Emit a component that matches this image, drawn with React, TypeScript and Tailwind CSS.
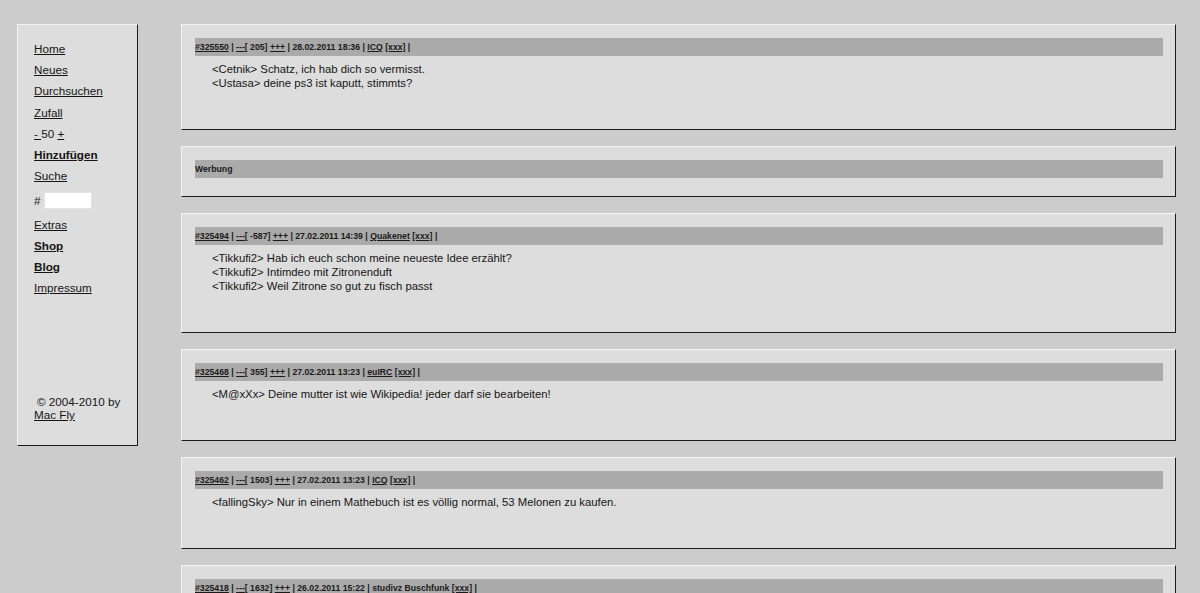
import React from "react";

type Quote = {
  id: string;
  score: string;
  date: string;
  net: string;
  netLink: boolean;
  lines: string[];
};

const quotes: Quote[] = [
  {
    id: "#325550",
    score: " 205",
    date: "28.02.2011 18:36",
    net: "ICQ",
    netLink: true,
    lines: ["<Cetnik> Schatz, ich hab dich so vermisst.", "<Ustasa> deine ps3 ist kaputt, stimmts?"],
  },
  {
    id: "#325494",
    score: " -587",
    date: "27.02.2011 14:39",
    net: "Quakenet",
    netLink: true,
    lines: [
      "<Tikkufi2> Hab ich euch schon meine neueste Idee erzählt?",
      "<Tikkufi2> Intimdeo mit Zitronenduft",
      "<Tikkufi2> Weil Zitrone so gut zu fisch passt",
    ],
  },
  {
    id: "#325468",
    score: " 355",
    date: "27.02.2011 13:23",
    net: "euIRC",
    netLink: true,
    lines: ["<M@xXx> Deine mutter ist wie Wikipedia! jeder darf sie bearbeiten!"],
  },
  {
    id: "#325462",
    score: " 1503",
    date: "27.02.2011 13:23",
    net: "ICQ",
    netLink: true,
    lines: ["<fallingSky> Nur in einem Mathebuch ist es völlig normal, 53 Melonen zu kaufen."],
  },
  {
    id: "#325418",
    score: " 1632",
    date: "26.02.2011 15:22",
    net: "studivz Buschfunk",
    netLink: false,
    lines: ["<Anonym> ..."],
  },
];

const boxCls =
  "bg-[#dddddd] border-t border-l border-t-[#f4f4f4] border-l-[#f4f4f4] border-b border-r border-b-[#1c1c1c] border-r-[#1c1c1c]";

function Bar({ children }: { children: React.ReactNode }) {
  return (
    <div className="h-[18px] bg-[#aaaaaa] text-[8.7px] font-bold leading-[18px] text-[#1a1a1a] whitespace-pre">
      {children}
    </div>
  );
}

function QuoteBox({ q }: { q: Quote }) {
  return (
    <div className={`${boxCls} pt-[13px] pl-[13px] pr-[12px] pb-[18px] mb-[16px]`}>
      <Bar>
        <a className="underline">{q.id}</a>
        {" | "}
        <a className="underline">---</a>
        {"[" + q.score + "] "}
        <a className="underline">+++</a>
        {" | " + q.date + " | "}
        {q.netLink ? <a className="underline">{q.net}</a> : <span>{q.net}</span>}{" "}
        <a className="underline">[xxx]</a>
        {" |"}
      </Bar>
      <div className="mt-[6px] mb-[21px] pl-[17px] text-[11.3px] leading-[14px] text-[#151515]">
        {q.lines.map((l, i) => (
          <div key={i}>{l}</div>
        ))}
      </div>
    </div>
  );
}

export default function App() {
  return (
    <div
      className="min-h-screen bg-[#cccccc] pt-[24px] pl-[17px] pr-[24px] flex items-start"
      style={{ fontFamily: '"Liberation Sans", Arial, sans-serif' }}
    >
      <div className={`${boxCls} w-[121px] shrink-0 pt-[13px] pl-[16px] pb-[23px] text-[11.7px] text-[#151515]`}>
        <div className="flex flex-col leading-[21.2px]">
          <a className="underline">Home</a>
          <a className="underline">Neues</a>
          <a className="underline">Durchsuchen</a>
          <a className="underline">Zufall</a>
          <div>
            <a className="underline">- </a>50 <a className="underline">+</a>
          </div>
          <a className="underline font-bold">Hinzufügen</a>
          <a className="underline">Suche</a>
          <div className="flex items-center h-[27.4px]">
            <span>#</span>
            <input
              className="ml-[3px] w-[48px] h-[17px] bg-white border border-[#e4e4e4] outline-none"
              type="text"
            />
          </div>
          <a className="underline">Extras</a>
          <a className="underline font-bold">Shop</a>
          <a className="underline font-bold">Blog</a>
          <a className="underline">Impressum</a>
        </div>
        <div className="mt-[96px] leading-[13.5px]">
          <div className="pl-[3px]">© 2004-2010 by</div>
          <a className="underline">Mac Fly</a>
        </div>
      </div>
      <div className="ml-[43px] flex-1">
        <QuoteBox q={quotes[0]} />
        <div className={`${boxCls} pt-[13px] pl-[13px] pr-[12px] pb-[18px] mb-[16px]`}>
          <Bar>Werbung</Bar>
        </div>
        {quotes.slice(1).map((q) => (
          <QuoteBox key={q.id} q={q} />
        ))}
      </div>
    </div>
  );
}
